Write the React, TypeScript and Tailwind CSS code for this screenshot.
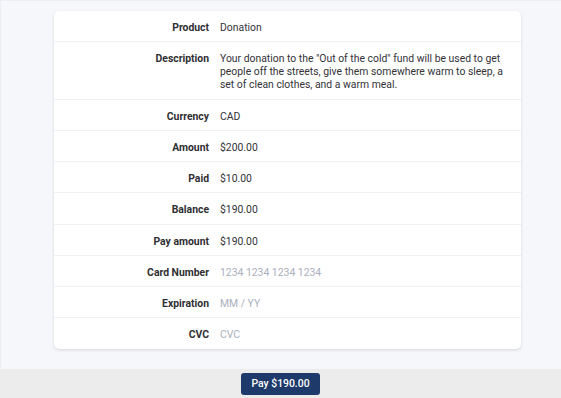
import React from 'react';

type Row = { label: string; value: string; placeholder?: boolean };

const rows: Row[] = [
  { label: 'Product', value: 'Donation' },
  {
    label: 'Description',
    value:
      'Your donation to the "Out of the cold" fund will be used to get people off the streets, give them somewhere warm to sleep, a set of clean clothes, and a warm meal.',
  },
  { label: 'Currency', value: 'CAD' },
  { label: 'Amount', value: '$200.00' },
  { label: 'Paid', value: '$10.00' },
  { label: 'Balance', value: '$190.00' },
  { label: 'Pay amount', value: '$190.00' },
  { label: 'Card Number', value: '1234 1234 1234 1234', placeholder: true },
  { label: 'Expiration', value: 'MM / YY', placeholder: true },
  { label: 'CVC', value: 'CVC', placeholder: true },
];

const App: React.FC = () => {
  return (
    <div
      className="flex h-[398px] w-[561px] flex-col bg-[#f6f7fa] text-[10.4px] leading-[13px] text-[#333333]"
      style={{ fontFamily: 'Roboto, "Liberation Sans", sans-serif' }}
    >
      <div className="flex-1 border-l border-t border-[#eceef3] pt-[10px]">
        <div className="ml-[53px] w-[467px] rounded-[5px] bg-white shadow-[0_1px_3px_rgba(60,70,110,0.18)]">
          {rows.map((row, i) => (
            <div
              key={row.label}
              className={`grid grid-cols-[155px_1fr] gap-x-[11px] pt-[10px] ${
                i < rows.length - 1 ? 'border-b border-[#f0f1f4] pb-[7.25px]' : 'pb-[8px]'
              }`}
            >
              <div className="text-right font-bold text-[#2f2f33]">{row.label}</div>
              <div className={`pr-[14px] ${row.placeholder ? 'text-[#a9afbd]' : 'text-[#333338]'}`}>
                {row.value}
              </div>
            </div>
          ))}
        </div>
      </div>
      <div className="flex h-[29px] items-center justify-center bg-[#ececec]">
        <button className="h-[22px] w-[79px] rounded-[3px] bg-[#1e3a6a] text-[10.4px] font-medium text-white">
          Pay $190.00
        </button>
      </div>
    </div>
  );
};

export default App;
